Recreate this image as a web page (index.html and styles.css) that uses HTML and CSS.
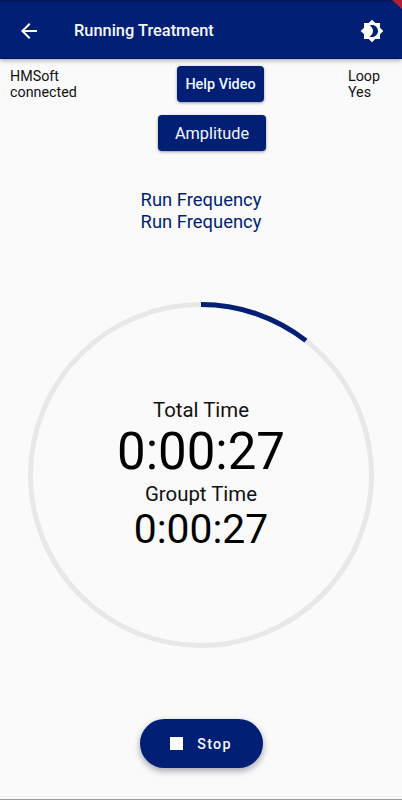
FILE: index.html
```
<!DOCTYPE html>
<html lang="en">
  <head>
    <title>Running Treatment</title>
    <meta charset="UTF-8">
    <meta name="viewport" content="width=device-width, initial-scale=1">
    <link rel="stylesheet" href="styles.css">
  </head>
  <body>
    <header>
      <button class="icon-btn" aria-label="Back">
        <svg width="24" height="24" viewBox="0 0 24 24"><path d="M20 11H7.83l5.59-5.59L12 4l-8 8 8 8 1.41-1.41L7.83 13H20v-2z"/></svg>
      </button>
      <h1>Running Treatment</h1>
      <button class="icon-btn" aria-label="Toggle theme">
        <svg width="24" height="24" viewBox="0 0 24 24"><path d="M20 8.69V4h-4.69L12 .69 8.69 4H4v4.69L.69 12 4 15.31V20h4.69L12 23.31 15.31 20H20v-4.69L23.31 12 20 8.69zM12 18c-.89 0-1.74-.2-2.5-.55C11.56 16.5 13 14.42 13 12s-1.44-4.5-3.5-5.45C10.26 6.2 11.11 6 12 6c3.31 0 6 2.69 6 6s-2.69 6-6 6z"/></svg>
      </button>
      <span class="corner"></span>
    </header>

    <main>
      <div class="status">
        <p>HMSoft<br>connected</p>
        <button class="btn help">Help Video</button>
        <p class="loop">Loop<br>Yes</p>
      </div>
      <button class="btn amplitude">Amplitude</button>

      <p class="frequency">Run Frequency<br>Run Frequency</p>

      <div class="timer">
        <svg class="ring" width="346" height="346" viewBox="0 0 346 346">
          <circle class="track" cx="173" cy="173" r="170.5"/>
          <circle class="progress" cx="173" cy="173" r="170.5" pathLength="100" stroke-dasharray="10.55 100" transform="rotate(-90 173 173)"/>
        </svg>
        <div class="times">
          <span class="label">Total Time</span>
          <span class="total">0:00:27</span>
          <span class="label">Groupt Time</span>
          <span class="group">0:00:27</span>
        </div>
      </div>

      <button class="stop"><span class="square"></span>Stop</button>
    </main>

    <footer></footer>
  </body>
</html>
```
FILE: styles.css
```
/* General styles */

* {
  box-sizing: border-box;
}

body {
  display: flex;
  flex-direction: column;
  height: 800px;
  margin: 0;
  overflow: hidden;
  background-color: #fafafa;
  color: #111;
  font-family: Roboto, sans-serif;
}

h1, p {
  margin: 0;
}

button {
  padding: 0;
  border: none;
  background-color: #001f75;
  color: #f4f7ff;
  font-family: inherit;
}

/* App bar */

header {
  position: relative;
  display: flex;
  flex: none;
  align-items: center;
  height: 59px;
  padding: 1px 18px 0 17px;
  border-top: 2px solid #001a5c;
  border-bottom: 1px solid #00145a;
  background-color: #001f75;
  box-shadow: 0 1px 5px rgba(0, 0, 40, 0.4);
}

header h1 {
  flex: 1;
  margin-left: 33px;
  color: #f4f7ff;
  font-size: 16.4px;
  font-weight: 500;
}

.icon-btn {
  width: 24px;
  height: 24px;
  background: none;
}

.icon-btn svg {
  display: block;
  fill: #fff;
}

/* Debug banner showing in the top right corner */
.corner {
  position: absolute;
  top: -2px;
  right: 0;
  width: 10px;
  height: 9px;
  background-color: #b02038;
  clip-path: polygon(0 0, 100% 0, 100% 100%);
}

/* Content */

main {
  display: flex;
  flex: 1;
  flex-direction: column;
  align-items: center;
}

.status {
  display: grid;
  grid-template-columns: 167px 87px 1fr;
  width: 100%;
  padding: 7px 22px 0 10px;
  font-size: 14.3px;
  line-height: 16px;
}

.status p {
  padding-top: 2px;
}

.status .loop {
  justify-self: end;
}

.btn {
  height: 36px;
  border-radius: 4px;
  box-shadow: 0 1px 3px rgba(0, 0, 50, 0.4);
}

.help {
  font-size: 14.4px;
  font-weight: 500;
}

.amplitude {
  width: 108px;
  margin: 13px 0 0 22px;
  font-size: 16.3px;
}

.frequency {
  margin-top: 38px;
  color: #001f75;
  font-size: 18.4px;
  line-height: 22px;
}

.timer {
  display: grid;
  place-items: center;
  margin-top: 69px;
}

.timer > * {
  grid-area: 1 / 1;
}

.ring {
  display: block;
  fill: none;
  stroke-width: 5;
}

.track {
  stroke: #e8e8e8;
}

.progress {
  stroke: #001f75;
}

.times {
  display: flex;
  flex-direction: column;
  align-items: center;
  color: #000;
}

.label {
  color: #111;
  font-size: 20.4px;
  line-height: 24px;
}

.total {
  font-size: 51px;
  line-height: 60px;
}

.group {
  font-size: 40.8px;
  line-height: 46px;
}

.stop {
  display: flex;
  align-items: center;
  justify-content: center;
  width: 123px;
  height: 49px;
  margin-top: 71px;
  border-radius: 25px;
  box-shadow: 0 3px 7px rgba(0, 0, 30, 0.35);
  font-size: 14.3px;
  font-weight: 500;
  letter-spacing: 1.3px;
}

.square {
  width: 13px;
  height: 13px;
  margin-right: 14px;
  background-color: #fff;
}

footer {
  height: 4px;
  border-top: 1px solid #eee;
  border-bottom: 1px solid #999;
}
```
